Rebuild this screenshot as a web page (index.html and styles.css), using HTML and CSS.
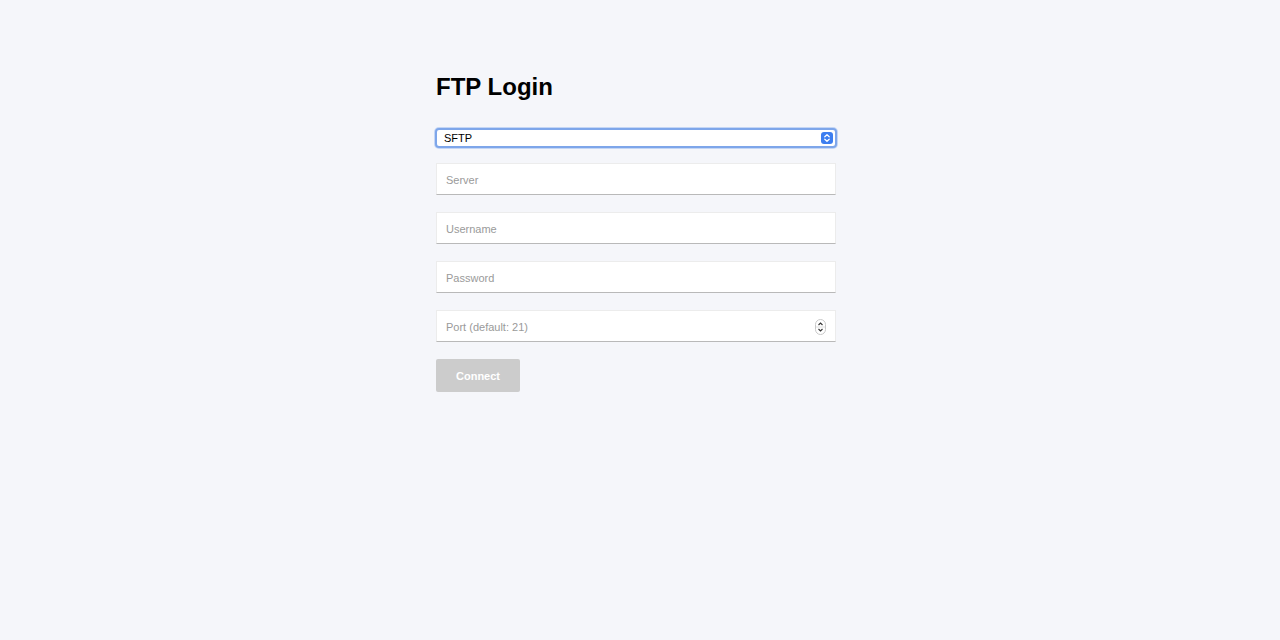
FILE: index.html
```html
<!DOCTYPE html>
<html>
<head>
<meta charset="utf-8">
<link rel="stylesheet" href="styles.css">
</head>
<body>
<main class="wrap">
  <h1 class="title">FTP Login</h1>
  <div class="select">
    <span class="select-text">SFTP</span>
    <span class="select-arrow">
      <svg width="12" height="12" viewBox="0 0 12 12"><path d="M3.8 4.8 L6 2.8 L8.2 4.8 M3.8 7.2 L6 9.2 L8.2 7.2" fill="none" stroke="#fff" stroke-width="1.3" stroke-linecap="round" stroke-linejoin="round"/></svg>
    </span>
  </div>
  <div class="field"><span class="ph">Server</span></div>
  <div class="field"><span class="ph">Username</span></div>
  <div class="field"><span class="ph">Password</span></div>
  <div class="field"><span class="ph">Port (default: 21)</span>
    <span class="spin">
      <svg width="11" height="16" viewBox="0 0 11 16"><rect x="0.5" y="0.5" width="10" height="15" rx="5" fill="#fff" stroke="#c8c8c8"/><line x1="1" y1="8" x2="10" y2="8" stroke="#e0e0e0"/><path d="M3.5 6 L5.5 4 L7.5 6" fill="none" stroke="#333" stroke-width="1.1"/><path d="M3.5 10 L5.5 12 L7.5 10" fill="none" stroke="#333" stroke-width="1.1"/></svg>
    </span>
  </div>
  <button class="btn">Connect</button>
</main>
</body>
</html>
```
FILE: styles.css
```css
html, body {
  margin: 0;
  padding: 0;
  background: #f5f6fa;
  font-family: "Liberation Sans", Arial, sans-serif;
}
.wrap {
  width: 400px;
  margin: 0 auto;
  padding: 73px 8px 0 0;
  display: flex;
  flex-direction: column;
}
.title {
  margin: 0 0 27px 0;
  font-size: 24px;
  line-height: 28px;
  font-weight: bold;
  color: #000;
}
.select {
  box-sizing: border-box;
  height: 20px;
  margin: 0 -1px 15px -1px;
  border: 2px solid #7ea6ea;
  border-radius: 4px;
  background: #fff;
  display: flex;
  align-items: center;
  justify-content: space-between;
  padding: 0 2px 0 7px;
  box-shadow: 0 0 0 1px #c4d6f5;
}
.select-text {
  font-size: 11px;
  color: #000;
}
.select-arrow {
  width: 12px;
  height: 12px;
  border-radius: 3px;
  background: #3d7ef0;
  display: flex;
}
.field {
  box-sizing: border-box;
  height: 32px;
  background: #fff;
  border: 1px solid #ececec;
  border-bottom: 1px solid #b9b9b9;
  display: flex;
  align-items: center;
  justify-content: space-between;
  padding: 1px 9px 0 9px;
  margin-bottom: 17px;
}
.ph {
  font-size: 11px;
  color: #9a9a9a;
}
.spin {
  display: flex;
}
.btn {
  width: 84px;
  height: 33px;
  border: none;
  border-radius: 2px;
  background: #cccccc;
  color: #fff;
  font-family: "Liberation Sans", Arial, sans-serif;
  font-size: 11px;
  font-weight: bold;
  padding: 0;
}
```
